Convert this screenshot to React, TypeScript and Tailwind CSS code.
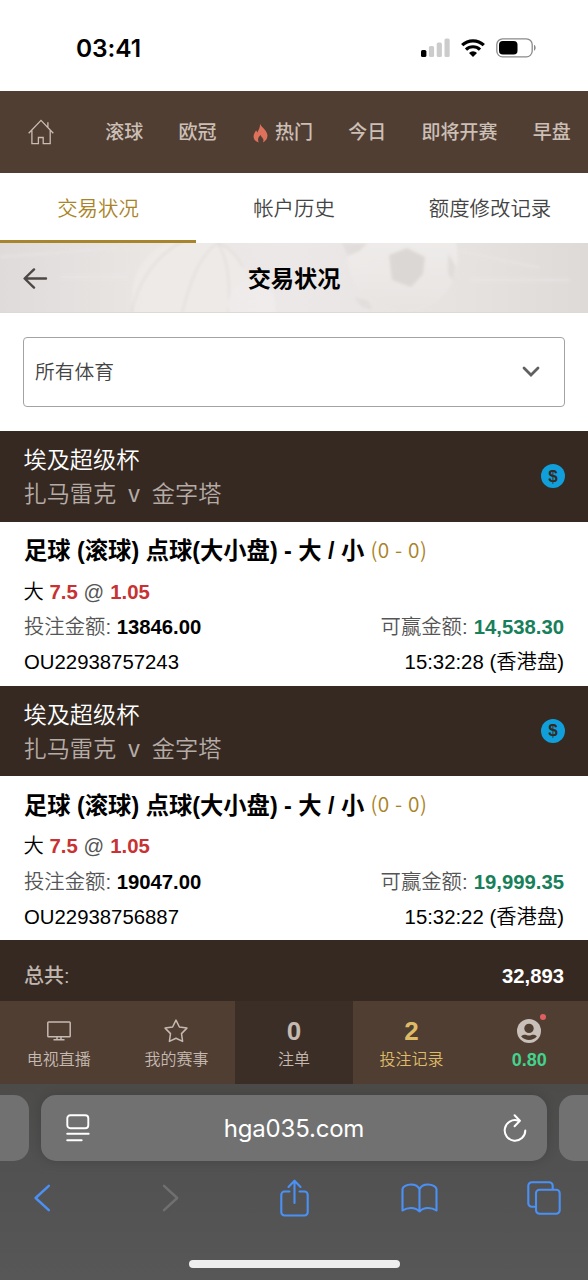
import type { ReactNode } from "react";

type Bet = { stake: string; win: string; id: string; time: string };

const bets: Bet[] = [
  { stake: "13846.00", win: "14,538.30", id: "OU22938757243", time: "15:32:28" },
  { stake: "19047.00", win: "19,999.35", id: "OU22938756887", time: "15:32:22" },
];

function StatusBar() {
  return (
    <div className="flex h-[91px] items-center justify-between bg-white pl-[76px] pr-[51px] pt-[5px]">
      <span className="font-['Inter'] text-[24.500px] font-semibold leading-none tracking-[-0.100px] text-black">03:41</span>
      <div className="flex items-center gap-[11px]">
        <svg width="29" height="20" viewBox="0 0 29 20">
          <rect x="0" y="12" width="5.4" height="7" rx="1.6" fill="#000" />
          <rect x="7.9" y="8" width="5.2" height="11" rx="1.6" fill="#ccc" />
          <rect x="15.7" y="4.5" width="5.2" height="14.5" rx="1.6" fill="#ccc" />
          <rect x="23.5" y="0.5" width="5.2" height="18.5" rx="1.6" fill="#ccc" />
        </svg>
        <svg width="24" height="20" viewBox="0 0 24 20" fill="none" stroke="#000" strokeWidth="3.2">
          <path d="M1.2 7.2a15.4 15.4 0 0 1 21.6 0" />
          <path d="M5 11.6a10 10 0 0 1 14 0" />
          <path d="M12 19l-4-4.1a5.7 5.7 0 0 1 8 0z" fill="#000" stroke="none" />
        </svg>
        <svg width="41" height="20" viewBox="0 0 41 20">
          <rect x="0.8" y="0.8" width="35.4" height="18" rx="5.8" fill="none" stroke="#8a8a8a" strokeWidth="1.3" />
          <rect x="3" y="3" width="18.5" height="13.6" rx="3.8" fill="#000" />
          <path d="M38 6.8c2.2 1 2.2 5 0 6z" fill="#8a8a8a" />
        </svg>
      </div>
    </div>
  );
}

function TopNav() {
  return (
    <nav className="flex h-[82px] items-center gap-[35.200px] overflow-hidden whitespace-nowrap bg-[#503e33] pl-[28px] text-[19px] font-medium leading-none text-[#cbbfb6]">
      <svg className="mr-[16px] shrink-0" width="26" height="26" viewBox="0 0 26 26" fill="none" stroke="#c9bdb2" strokeWidth="1.3">
        <path d="M.7 14.2 13 1.4l12.3 12.8M3.9 11.4v13.3h6.5v-6.2h4.8v6.2h7V11.4M19.9 8.2V3.3" />
      </svg>
      <span className="pt-px">滚球</span>
      <span className="pt-px">欧冠</span>
      <span className="flex items-center gap-[7.5px] pl-px pt-px">
        <svg width="15" height="20" viewBox="0 0 15 20" fill="#de715b">
          <path d="M7 .4c.7 3.4 6.900 6.300 7.400 11.500.4 3.800-1.600 6.300-4.500 7.500.8-1.700.7-3.300-.4-4.500-.8-.9-1.500-1.700-1.700-3-1.900 1.300-2.900 3-2.700 5 0 .9.300 1.700.7 2.500C2.500 18.500.5 16.500.6 13.300c0-2.700 1.600-4.200 2.600-6 .4 1 .6 1.600 1.200 2.200C5.700 6.600 7.400 4 7 .4z" />
        </svg>
        热门
      </span>
      <span className="pt-px">今日</span>
      <span className="pt-px">即将开赛</span>
      <span className="pt-px">早盘</span>
    </nav>
  );
}

function Tabs() {
  return (
    <div className="grid h-[70px] grid-cols-3 bg-white text-center text-[20.4px] font-[350] leading-[72px] text-[#444]">
      <span className="h-[70px] border-b-[3px] border-[#a8852c] text-[#a98325]">交易状况</span>
      <span>帐户历史</span>
      <span>额度修改记录</span>
    </div>
  );
}

function PageHeader() {
  return (
    <header className="relative flex h-[70px] items-center justify-center bg-[#e6e2e0]">
      <svg className="absolute inset-0" width="588" height="70" viewBox="0 0 588 70">
        <defs>
          <linearGradient id="wash">
            <stop offset="0" stopColor="#dfdbda" />
            <stop offset=".25" stopColor="#e9e6e4" />
            <stop offset=".5" stopColor="#ebe8e7" />
            <stop offset=".8" stopColor="#e6e2e0" />
            <stop offset="1" stopColor="#dedad8" />
          </linearGradient>
          <linearGradient id="ball" x2="0" y2="1">
            <stop offset="0" stopColor="#f5f3f2" />
            <stop offset="1" stopColor="#e8e4e2" />
          </linearGradient>
          <filter id="soft"><feGaussianBlur stdDeviation="1.400" /></filter>
        </defs>
        <rect width="588" height="70" fill="url(#wash)" />
        <g filter="url(#soft)" opacity=".8">
          <circle cx="192" cy="54" r="60" fill="#eeebe9" />
          <g fill="none" stroke="#dfdad8" strokeWidth="1.500">
            <path d="M132 70C137 38 157 12 183-2M182 70C190 40 198 15 217 0c10 12 14 38 11 70M217 0c12 4 20 12 26 25" />
            <path d="M0 14 120 5M60 34h70" stroke="#eae7e6" />
            <path d="M460 8l80 17M470 37h100" stroke="#eae7e6" />
          </g>
          <circle cx="252" cy="62" r="24" fill="#f0edec" />
          <circle cx="403" cy="15" r="55" fill="url(#ball)" />
          <path d="M389 12l18-7 18 9-2 17-12 13-19-7z" fill="#d8d5d2" />
          <path d="M342 0h26l-8 8-12 5zM448 10l8 14-3 14-5-7zM354 54l14 4 5 9-11-3z" fill="#e0dcda" />
        </g>
        <path d="M0 69.500h588" stroke="#dcd9d7" />
      </svg>
      <svg className="absolute left-[23px] top-[25px]" width="25" height="21" viewBox="0 0 25 21" fill="none" stroke="#4d4746" strokeWidth="2.400" strokeLinecap="round" strokeLinejoin="round">
        <path d="M11 1.400 1.600 10.500 11 19.600M2 10.500h21" />
      </svg>
      <h1 className="relative pt-[3px] text-[23.2px] font-bold leading-none text-black">交易状况</h1>
    </header>
  );
}

function SportSelect() {
  return (
    <div className="h-[118px] bg-white px-[23px] pt-[24px]">
      <div className="flex h-[70px] items-center justify-between rounded-[4px] border-[1.500px] border-[#a3a3a3] pl-[11px] pr-[24px]">
        <span className="pt-[2px] text-[19.8px] font-[350] leading-none text-[#444]">所有体育</span>
        <svg width="18" height="12" viewBox="0 0 18 12" fill="none" stroke="#606060" strokeWidth="2.800" strokeLinecap="round">
          <path d="M2 2l7 7 7-7" />
        </svg>
      </div>
    </div>
  );
}

function BetCard({ bet }: { bet: Bet }) {
  return (
    <section className="h-[254.700px]">
      <div className="flex h-[90.500px] items-center justify-between bg-[#352922] pl-[23.500px] pr-[23px]">
        <div className="pt-[2px] text-[23.200px] font-[350] leading-[34px]">
          <div className="text-white">埃及超级杯</div>
          <div className="text-[#b5aca7]">
            扎马雷克<span className="mx-[12px]">v</span>金字塔
          </div>
        </div>
        <span className="flex size-[24px] items-center justify-center rounded-full bg-[#109fda] text-[17px] font-bold leading-none text-[#352922]">$</span>
      </div>
      <div className="bg-white px-[24px] pt-[9px] text-[20.350px] text-black">
        <h2 className="flex h-[40px] items-center whitespace-nowrap text-[23.300px] font-bold leading-none">
          <span className="pt-[2px]">足球 (滚球) 点球(大小盘) - 大 / 小</span>
          <span className="ml-[6px] pb-[3px] font-['Noto_Sans_CJK_SC'] text-[20.800px] font-[350] tracking-[0.600px] text-[#aa8226]">(0 - 0)</span>
        </h2>
        <div className="-ml-[0.500px] h-[40px] text-[20.350px] leading-[42px]">
          <span className="font-[350]">大</span> <b className="text-[#c83232]">7.5</b> <span className="text-[#555]">@</span> <b className="ml-[0.500px] text-[#c83232]">1.05</b>
        </div>
        <div className="flex h-[34px] items-center justify-between leading-none">
          <span className="font-[350] text-[#555]">投注金额: <b className="text-[20.300px] font-bold text-black">{bet.stake}</b></span>
          <span className="font-[350] text-[#555]">可赢金额: <b className="ml-[0.500px] text-[20.300px] font-bold text-[#17805a]">{bet.win}</b></span>
        </div>
        <div className="flex h-[35px] items-center justify-between leading-none">
          <span>{bet.id}</span>
          <span className="font-[350]">{bet.time} (香港盘)</span>
        </div>
      </div>
    </section>
  );
}

function NavItem({ icon, label, className = "" }: { icon: ReactNode; label: ReactNode; className?: string }) {
  return (
    <div className={`flex flex-col items-center pt-[15px] ${className}`}>
      <div className="flex h-[30px] items-center justify-center text-[26px] font-bold leading-none">{icon}</div>
      <div className="flex h-[28px] items-center text-[16px] font-[350] leading-none">{label}</div>
    </div>
  );
}

function BottomNav() {
  return (
    <nav className="grid h-[83px] grid-cols-5 bg-[#503e33] text-[#c5bab1]">
      <NavItem
        label="电视直播"
        icon={
          <svg width="24" height="20" viewBox="0 0 24 20" fill="none" stroke="currentColor" strokeWidth="1.500">
            <rect x=".8" y="1" width="22.400" height="14.800" rx=".8" />
            <path d="M10 16v2.500M14 16v2.500M6.500 18.800h11" />
          </svg>
        }
      />
      <NavItem
        label="我的赛事"
        icon={
          <svg width="24" height="24" viewBox="0 0 24 24" fill="none" stroke="currentColor" strokeWidth="1.500" strokeLinejoin="round">
            <path d="M12 1.100l3.400 6.900 7.500 1.100-5.400 5.500 1.100 7.800L12 19.300l-6.600 3.100 1.100-7.800L1.100 9.100 8.600 8z" />
          </svg>
        }
      />
      <NavItem className="bg-[#3b2e27]" label="注单" icon="0" />
      <NavItem className="text-[#dfbb67]" label="投注记录" icon="2" />
      <NavItem
        label={<b className="pt-px text-[18px] font-bold text-[#43d38c]">0.80</b>}
        icon={
          <span className="relative">
            <svg width="24" height="24" viewBox="0 0 24 24">
              <circle cx="12" cy="12" r="12" fill="#c9c0ba" />
              <circle cx="12" cy="9.400" r="4.700" fill="#503e33" />
              <path d="M4.100 17.200c2-1.600 4-1.800 5.400-1.200 1.600.7 3.400.7 5 0 1.400-.6 3.400-.4 5.400 1.200-3.800 5-12 5-15.800 0z" fill="#503e33" />
            </svg>
            <i className="absolute -right-[5px] -top-[5px] size-[6px] rounded-full bg-[#e06060]" />
          </span>
        }
      />
    </nav>
  );
}

function BrowserBar() {
  return (
    <footer className="flex h-[196px] flex-col items-center bg-[#545454] bg-linear-to-b from-[#4c4b4a] via-[#515151] via-40% to-[#575757]">
      <div className="flex w-full justify-between pt-[11.500px]">
        <div className="h-[66px] w-[29px] rounded-r-[15px] bg-[#717171]" />
        <div className="flex h-[66px] w-[506px] items-center justify-between rounded-[15px] bg-[#717171] pl-[25px] pr-[20px] shadow-[0_0_12px_rgba(0,0,0,0.15)]">
          <svg width="24" height="28" viewBox="0 0 24 28" fill="none" stroke="#fff" strokeWidth="1.900" strokeLinecap="round">
            <rect x="1.300" y="1.300" width="21" height="13" rx="3" />
            <path d="M1.200 19.700h21.500M1.200 26.200h14.500" />
          </svg>
          <span className="mr-[5px] pt-px font-['Inter'] text-[24px] leading-none tracking-[-0.200px] text-white">hga035.com</span>
          <svg width="24" height="28" viewBox="0 0 24 28" fill="none" stroke="#fff" strokeWidth="2" strokeLinecap="round" strokeLinejoin="round">
            <path d="M15 6.600A10.300 10.300 0 1 0 22.300 16.400M11.600 1.300l5.300 5.400-5.300 5.500" />
          </svg>
        </div>
        <div className="h-[66px] w-[29px] rounded-l-[15px] bg-[#717171]" />
      </div>
      <div className="grid h-[73px] w-[625px] shrink-0 grid-cols-5 items-center justify-items-center text-[#4b91f5]">
        <svg className="mr-[3px]" width="17" height="28" viewBox="0 0 17 28" fill="none" stroke="currentColor" strokeWidth="2.400" strokeLinecap="round" strokeLinejoin="round">
          <path d="M14.800 1.800 1.600 14l13.200 12.200" />
        </svg>
        <svg className="ml-[3px]" width="17" height="28" viewBox="0 0 17 28" fill="none" stroke="#707070" strokeWidth="2.400" strokeLinecap="round" strokeLinejoin="round">
          <path d="M2 1.800 15.200 14 2 26.200" />
        </svg>
        <svg width="29" height="38" viewBox="0 0 29 38" fill="none" stroke="currentColor" strokeWidth="2.100" strokeLinecap="round" strokeLinejoin="round">
          <path d="M9.500 12.500H4.500a3.200 3.200 0 0 0-3.200 3.200v17.600a3.200 3.200 0 0 0 3.200 3.200h20a3.200 3.200 0 0 0 3.200-3.200V15.700a3.200 3.200 0 0 0-3.200-3.200h-5M14.500 24V2M8.500 8l6-6.300 6 6.300" />
        </svg>
        <svg width="37" height="30" viewBox="0 0 37 30" fill="none" stroke="currentColor" strokeWidth="2.100" strokeLinecap="round" strokeLinejoin="round">
          <path d="M18.500 28.500V6.200C17 3 14 1.500 10 1.500S1.500 3.500 1.500 6.500v21C6 24.500 14 23.500 18.500 28.500 23 23.500 31 24.500 35.500 27.500v-21c0-3-4.500-5-8.500-5s-7 1.500-8.500 4.700" />
        </svg>
        <svg width="34" height="34" viewBox="0 0 34 34" fill="none" stroke="currentColor" strokeWidth="2.100" strokeLinejoin="round">
          <path d="M9 25.800H4.800a3.500 3.500 0 0 1-3.500-3.500V4.800a3.500 3.500 0 0 1 3.500-3.500h17.400a3.500 3.500 0 0 1 3.500 3.500v4" />
          <rect x="9" y="8.800" width="23.700" height="24" rx="3.500" />
        </svg>
      </div>
      <div className="mt-[26px] h-[8px] w-[211px] rounded-full bg-[#eee]" />
    </footer>
  );
}

export default function App() {
  return (
    <main className="flex h-[1280px] w-[588px] flex-col overflow-hidden bg-white font-['Liberation_Sans','Noto_Sans_CJK_SC',sans-serif] [&>*]:shrink-0">
      <StatusBar />
      <TopNav />
      <Tabs />
      <PageHeader />
      <SportSelect />
      {bets.map((bet) => (
        <BetCard key={bet.id} bet={bet} />
      ))}
      <div className="flex h-[60.600px] items-center justify-between bg-[#352922] px-[24px] pt-[10px] text-[20px] font-bold leading-none text-[#c0b6b0]">
        <span className="pt-px font-medium">总共:</span>
        <span className="text-[20.300px] text-white">32,893</span>
      </div>
      <BottomNav />
      <BrowserBar />
    </main>
  );
}
